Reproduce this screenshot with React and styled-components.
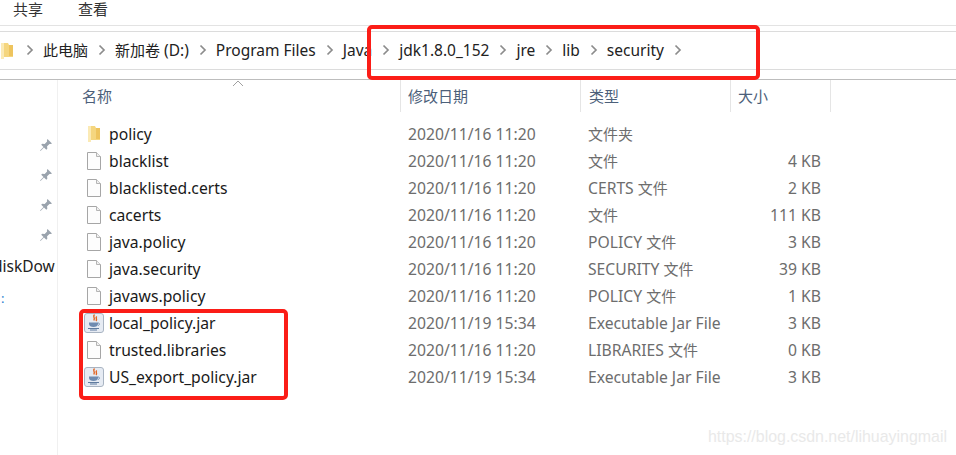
import React from "react";
import styled, { createGlobalStyle } from "styled-components";

const Global = createGlobalStyle`
  html, body { margin: 0; padding: 0; background: #fff; }
  body { font-family: "Noto Sans", "Noto Sans CJK SC", sans-serif; overflow: hidden; }
`;
const Page = styled.div`
  width: 956px; height: 455px; position: relative; overflow: hidden; background: #fff;
  display: flex; flex-direction: column; color: #1a1a1a;
`;
const Ribbon = styled.div`
  height: 26px; display: flex; gap: 35px; padding-left: 13px; box-sizing: border-box;
  border-bottom: 1px solid #e3e3e3; font-size: 15px; line-height: 19px; color: #333;
`;
const AddressBar = styled.div`
  margin-top: 5px; height: 39px; box-sizing: border-box; border-top: 1px solid #dcdcdc; border-bottom: 1px solid #dcdcdc;
  display: flex; align-items: center; font-size: 15.5px; color: #222;
`;
const Crumb = styled.span` margin-left: 9px; white-space: nowrap; line-height: 36px; height: 37px; `;
const Cjk = styled.span` font-size: 15px; `;
const ChevronBox = styled.svg` width: 8px; height: 12px; margin-left: ${p => p.$ml}px; flex: none; margin-top: -2px; `;
const Body = styled.div`
  margin-top: 9px; flex: 1; display: flex; border-top: 1px solid #bdbdbd; min-height: 0;
`;
const Side = styled.div`
  width: 58px; flex: none; box-sizing: border-box; border-right: 1px solid #f0f0f0;
  display: flex; flex-direction: column; padding-top: 58px; overflow: hidden;
`;
const Pin = styled.svg` width: 14px; height: 14px; margin: 0 0 16px 39px; flex: none; `;
const SideLabel = styled.div` font-size: 15.5px; line-height: 20px; color: #222; margin-left: -7px; white-space: nowrap; margin-top: -2px; `;
const SideMark = styled.div` font-size: 13px; line-height: 16px; color: #2a7fd0; margin-top: 14px; padding-left: 1px; `;
const Main = styled.div` flex: 1; position: relative; `;
const Header = styled.div`
  height: 32px; display: grid; grid-template-columns: 343px 180px 150px 100px; align-items: stretch;
  font-size: 15px; color: #4c607a; margin-bottom: 8px;
`;
const HeadCell = styled.div`
  padding-left: ${p => p.$pl}px; line-height: 32px; border-right: 1px solid #e5e5e5; box-sizing: border-box;
`;
const SortCaret = styled.svg` position: absolute; left: 174px; top: 0; width: 12px; height: 7px; `;
const Row = styled.div`
  height: 27px; display: grid; grid-template-columns: 342px 180px 150px 91px; align-items: center; font-size: 15.7px;
`;
const NameCell = styled.div`
  display: flex; align-items: center; color: #1a1a1a; padding-left: ${p => p.$jar ? 26 : 29}px; white-space: nowrap;
`;
const NameText = styled.span` margin-left: ${p => p.$jar ? 5 : 8}px; `;
const Meta = styled.div` color: #6d6d6d; padding-left: 8px; white-space: nowrap; `;
const Size = styled.div` color: #6d6d6d; text-align: right; `;
const Highlight = styled.div`
  position: absolute; left: ${p => p.$l}px; top: ${p => p.$t}px; width: ${p => p.$w}px; height: ${p => p.$h}px;
  box-sizing: border-box; border: 4px solid #fb1d17; border-radius: 5px; pointer-events: none;
`;
const Watermark = styled.div`
  position: absolute; left: 708px; top: 426px; font-family: "Liberation Sans", sans-serif; font-size: 15.93px; line-height: 22px;
  color: #e9e9e9; white-space: nowrap;
`;

const Mixed = ({ text }) =>
  text.split(/([\u4e00-\u9fff]+)/).map((part, i) =>
    /[\u4e00-\u9fff]/.test(part) ? <Cjk key={i}>{part}</Cjk> : part
  );

const Chevron = ({ ml }) => (
  <ChevronBox $ml={ml} viewBox="0 0 8 12"><path d="M1.500 1.500 6 6l-4.500 4.500" fill="none" stroke="#8c8c8c" strokeWidth="1.7" /></ChevronBox>
);
const FolderIcon = () => (
  <svg width="14" height="18" viewBox="0 0 14 18" style={{ flex: "none" }}>
    <path d="M1 1h7l1 2h4v12H4l-3 2z" fill="#f5d67f" />
    <path d="M1 1h3v16l-3 0z" fill="#fbeab5" />
    <path d="M9 3h4v11H9z" fill="#eec45e" />
  </svg>
);
const FileIcon = () => (
  <svg width="14" height="18" viewBox="0 0 14 18" style={{ flex: "none" }}>
    <path d="M.5.5h9l4 4v13H.5z" fill="#fdfdfd" stroke="#a6a6a6" />
    <path d="M9.500.5v4h4" fill="#f0f0f0" stroke="#b5b5b5" />
  </svg>
);
const JarIcon = () => (
  <svg width="20" height="20" viewBox="0 0 20 20" style={{ flex: "none" }}>
    <rect x=".5" y=".5" width="19" height="19" rx="2.500" fill="#e6ebf3" stroke="#a9b4c2" />
    <path d="M10.500 1.500c-2.500 2.500 1.500 3.500-.8 6M12.800 3.500c-2 1.500 1 2.500-.8 4.500" fill="none" stroke="#e2631f" strokeWidth="1.400" />
    <path d="M5 9.500h9v1.500c0 2-2 3-4.500 3S5 13 5 11z" fill="#6f8bb0" />
    <path d="M14 10c2 0 2 2 0 2.500" fill="none" stroke="#6f8bb0" />
    <path d="M4 15.500h11M6 17h7" stroke="#5f7b9f" strokeWidth="1" />
  </svg>
);
const PinGlyph = () => (
  <Pin viewBox="0 0 14 14"><path d="M8.500 1 13 5.500l-1.200.6-1.300-.2-2.400 2.400.2 2.500-1 1-2.300-2.300L1.500 13l-.4-.4 3.400-3.600-2.300-2.300 1-1 2.500.2 2.400-2.400-.2-1.300z" fill="#9aa3ad" /></Pin>
);

const crumbs = ["此电脑", "新加卷 (D:)", "Program Files", "Java", "jdk1.8.0_152", "jre", "lib", "security"];
const rows = [
  ["policy", "文件夹", "", "folder"],
  ["blacklist", "文件", "4 KB", "file"],
  ["blacklisted.certs", "CERTS 文件", "2 KB", "file"],
  ["cacerts", "文件", "111 KB", "file"],
  ["java.policy", "POLICY 文件", "3 KB", "file"],
  ["java.security", "SECURITY 文件", "39 KB", "file"],
  ["javaws.policy", "POLICY 文件", "1 KB", "file"],
  ["local_policy.jar", "Executable Jar File", "3 KB", "jar", "2020/11/19 15:34"],
  ["trusted.libraries", "LIBRARIES 文件", "0 KB", "file"],
  ["US_export_policy.jar", "Executable Jar File", "3 KB", "jar", "2020/11/19 15:34"],
];

export default function App() {
  return (
    <Page>
      <Global />
      <Ribbon><span>共享</span><span>查看</span></Ribbon>
      <AddressBar>
        <FolderIcon />
        <Chevron ml={12} />
        {crumbs.map(c => (
          <React.Fragment key={c}>
            <Crumb><Mixed text={c} /></Crumb>
            <Chevron ml={10} />
          </React.Fragment>
        ))}
      </AddressBar>
      <Body>
        <Side>
          <PinGlyph /><PinGlyph /><PinGlyph /><PinGlyph />
          <SideLabel>diskDow</SideLabel>
          <SideMark>:</SideMark>
        </Side>
        <Main>
          <SortCaret viewBox="0 0 12 7"><path d="M1 6l5-5 5 5" fill="none" stroke="#a0a0a0" /></SortCaret>
          <Header>
            <HeadCell $pl={24}>名称</HeadCell>
            <HeadCell $pl={7}>修改日期</HeadCell>
            <HeadCell $pl={8}>类型</HeadCell>
            <HeadCell $pl={7}>大小</HeadCell>
          </Header>
          {rows.map(([name, type, size, kind, date]) => (
            <Row key={name}>
              <NameCell $jar={kind === "jar"}>
                {kind === "folder" ? <FolderIcon /> : kind === "jar" ? <JarIcon /> : <FileIcon />}
                <NameText $jar={kind === "jar"}>{name}</NameText>
              </NameCell>
              <Meta>{date || "2020/11/16 11:20"}</Meta>
              <Meta><Mixed text={type} /></Meta>
              <Size>{size}</Size>
            </Row>
          ))}
        </Main>
      </Body>
      <Highlight $l={367} $t={25} $w={393} $h={55} />
      <Highlight $l={79} $t={309} $w={209} $h={91} />
      <Watermark>https://blog.csdn.net/lihuayingmail</Watermark>
    </Page>
  );
}
